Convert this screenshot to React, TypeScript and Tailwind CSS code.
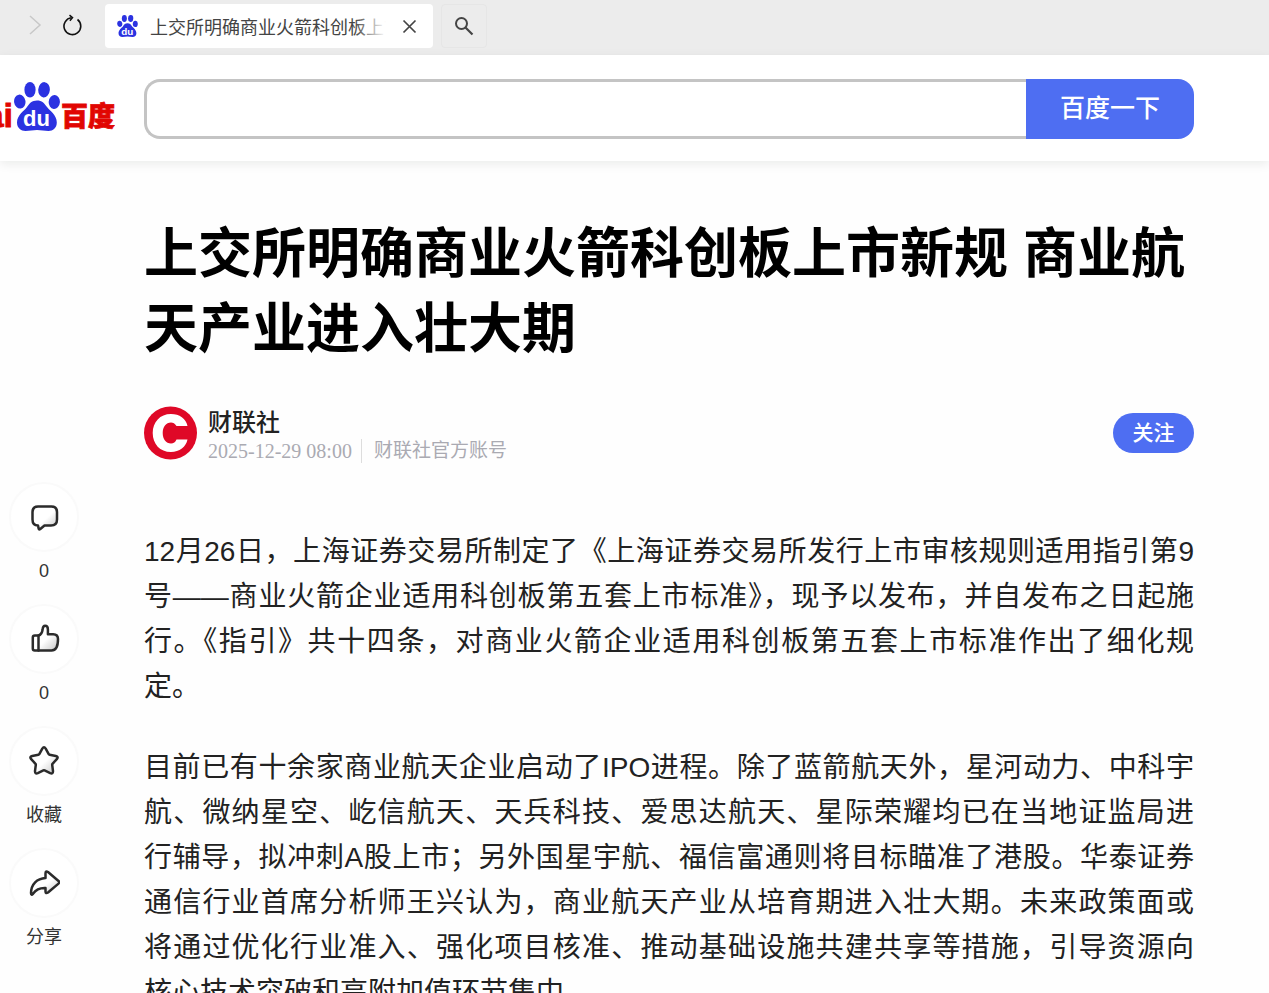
import type { ReactNode } from 'react';

const paragraphs = [
  [
    '12月26日，上海证券交易所制定了《上海证券交易所发行上市审核规则适用指引第9',
    '号——商业火箭企业适用科创板第五套上市标准》，现予以发布，并自发布之日起施',
    '行。《指引》共十四条，对商业火箭企业适用科创板第五套上市标准作出了细化规',
    '定。',
  ],
  [
    '目前已有十余家商业航天企业启动了IPO进程。除了蓝箭航天外，星河动力、中科宇',
    '航、微纳星空、屹信航天、天兵科技、爱思达航天、星际荣耀均已在当地证监局进',
    '行辅导，拟冲刺A股上市；另外国星宇航、福信富通则将目标瞄准了港股。华泰证券',
    '通信行业首席分析师王兴认为，商业航天产业从培育期进入壮大期。未来政策面或',
    '将通过优化行业准入、强化项目核准、推动基础设施共建共享等措施，引导资源向',
    '核心技术突破和高附加值环节集中。',
  ],
];

function Paw({ className }: { className: string }) {
  return (
    <svg viewBox="0 0 46 49" className={className} aria-hidden="true">
      <g fill="#2b32e1">
        <ellipse cx="5.8" cy="19.6" rx="5.7" ry="7" transform="rotate(-8 5.8 19.6)" />
        <ellipse cx="16" cy="7.800" rx="5.600" ry="7.700" />
        <ellipse cx="30" cy="7.800" rx="5.800" ry="7.700" transform="rotate(5 30 8.2)" />
        <ellipse cx="40.3" cy="20" rx="5.6" ry="7" transform="rotate(5 40.3 20)" />
        <path d="M23 18.500c-5 0-7.500 2.800-10 6.500-2.600 3.800-10 8-10 15.500 0 5.500 4 8.500 8.500 8.500 4 0 7.500-1 11.500-1s7.500 1 11.500 1c4.500 0 8.300-3 8.300-8.500 0-7.500-7-11.700-9.800-15.500-2.700-3.800-5-6.500-10-6.500z" />
      </g>
      <text x="22.500" y="43.500" textAnchor="middle" fontSize="22" fontWeight="700" fill="#fff" fontFamily="Liberation Sans, sans-serif">du</text>
    </svg>
  );
}

function Action({ label, children }: { label: string; children: ReactNode }) {
  return (
    <button type="button" className="flex h-[122px] flex-col items-center text-[18px] leading-6 text-[#333]">
      <span className="mb-[7px] flex size-[70px] items-center justify-center rounded-full border-2 border-[#fafafa] bg-white">
        <svg
          viewBox="0 0 32 32"
          className="size-8"
          fill="none"
          stroke="#2b2b2b"
          strokeWidth="2.5"
          strokeLinejoin="round"
          strokeLinecap="round"
          aria-hidden="true"
        >
          <defs>
            <linearGradient id="shade" x1="0.3" y1="0.3" x2="0.9" y2="0.9">
              <stop offset="0.4" stopColor="#fff" />
              <stop offset="1" stopColor="#d0d0d0" />
            </linearGradient>
          </defs>
          {children}
        </svg>
      </span>
      {label}
    </button>
  );
}

export default function App() {
  return (
    <div className="flex h-screen flex-col overflow-hidden bg-[#fefefe] font-['Liberation_Sans','Noto_Sans_CJK_SC',sans-serif] text-[#222]">
      <div className="flex h-[55px] shrink-0 items-start bg-[#ececec] pt-1 pl-6">
        <button type="button" aria-label="前进" className="mt-2 flex size-6 items-center justify-center">
          <svg viewBox="0 0 24 24" className="size-6" fill="none" stroke="#c8c8c8" strokeWidth="1.5" aria-hidden="true">
            <path d="M6 4l10 9-10 9" />
          </svg>
        </button>
        <button type="button" aria-label="刷新" className="mt-2 ml-3 flex size-6 items-center justify-center">
          <svg viewBox="0 0 24 24" className="size-6" fill="none" stroke="#111" strokeWidth="1.6" aria-hidden="true">
            <path d="M17.500 7.500A8.400 8.400 0 1 1 11.500 5.800" />
            <path d="M9.500 3.200l3 2.500-2.600 3" strokeWidth="1.5" />
          </svg>
        </button>
        <div className="ml-[21px] flex h-[44px] w-[328px] items-center rounded-sm bg-white pl-3">
          <Paw className="h-[22px] w-[21px] shrink-0" />
          <span className="relative mt-[3px] ml-3 h-6 w-[236px] overflow-hidden text-[18px] leading-6 whitespace-nowrap text-[#444]">
            上交所明确商业火箭科创板上市
            <span className="absolute inset-y-0 right-0 w-8 bg-linear-to-r from-transparent to-white" />
          </span>
          <button type="button" aria-label="关闭标签页" className="ml-3 flex size-6 items-center justify-center">
            <svg viewBox="0 0 24 24" className="size-6" fill="none" stroke="#444" strokeWidth="1.7" aria-hidden="true">
              <path d="M5.500 6.500l12 12M17.500 6.500l-12 12" />
            </svg>
          </button>
        </div>
        <button type="button" aria-label="搜索标签页" className="ml-2 flex h-[44px] w-[46px] items-center justify-center rounded-sm border border-[#e6e6e6]">
          <svg viewBox="0 0 24 24" className="size-6" fill="none" stroke="#444" strokeWidth="2" aria-hidden="true">
            <circle cx="9.500" cy="9.500" r="5.500" />
            <path d="M13.500 13.500l7 7" strokeWidth="2.2" />
          </svg>
        </button>
      </div>

      <header className="relative flex h-[106px] shrink-0 items-start bg-white pt-6 pr-[75px] shadow-[0_3px_10px_rgba(0,25,15,0.08)]">
        <a href="#" aria-label="百度首页" className="flex h-[60px] w-[115px] shrink-0 items-center justify-end overflow-hidden font-bold text-[#e10602]">
          <span className="mt-3 mr-px text-[34px] leading-9 [-webkit-text-stroke:0.8px_#e10602]">Bai</span>
          <Paw className="mr-px mb-[6px] h-[49px] w-[46px] shrink-0" />
          <span className="mt-4 shrink-0 text-[27px] leading-9 font-black [-webkit-text-stroke:0.8px_#e10602]">百度</span>
        </a>
        <form className="ml-[29px] flex h-[60px] min-w-0 flex-1" onSubmit={(e) => e.preventDefault()}>
          <input
            type="text"
            aria-label="搜索"
            className="min-w-0 flex-1 rounded-l-2xl border-3 border-r-0 border-[#c4c4c4] bg-white px-5 text-[26px] outline-none"
          />
          <button type="submit" className="w-[168px] rounded-r-2xl bg-[#4e6ef2] text-[25px] font-medium text-white">
            百度一下
          </button>
        </form>
      </header>

      <div className="flex min-h-0 flex-1 items-start pr-[75px]">
        <aside className="flex w-[88px] shrink-0 flex-col items-center pt-[321px]">
          <Action label="0">
            <path fill="url(#shade)" d="M10 5.500h13.500q5.500 0 5.500 5.500v7.500q0 6-6 6h-6.500l-4.500 3.800q-1 .6-1.300-.6l-.7-3.200q-5.500 0-5.500-6V11q0-5.500 5.500-5.500z" />
          </Action>
          <Action label="0">
            <path fill="url(#shade)" d="M10.500 12.500c3-.8 3.800-3.500 4.100-6 .2-2.300.8-3.700 2.500-3.700s2.800 1.500 2.800 3.700v4.700h5.300q4.800 0 4.800 4.800c0 7-1.500 11.500-6.500 11.500H6.800q-2 0-2-2v-11q0-2 2-2z" />
            <path d="M10.500 12.500v15" />
          </Action>
          <Action label="收藏">
            <path fill="url(#shade)" d="M14.300 3.600q1.700-2.600 3.400 0l3 5.600q.3.500.9.600l6.200 1.200q3 .8 1 3.200l-4.300 4.600q-.4.500-.3 1.100l.8 6.300q0 3-2.800 1.900l-5.600-2.700q-.6-.3-1.200 0l-5.600 2.700q-2.800 1.100-2.800-1.900l.8-6.300q.1-.6-.3-1.100l-4.300-4.600q-2-2.400 1-3.200l6.200-1.200q.6-.1.900-.6z" />
          </Action>
          <Action label="分享">
            <path fill="url(#shade)" d="M17.500 6.500q0-3 2.500-1.500L30.500 14q1.500 1.300 0 2.600L20 25.500q-2.500 1.500-2.500-1v-3.500c-6-.3-9.500 1.500-12.500 5.800q-2 2-2-.8C3.200 17 9 11.500 17.500 11z" />
          </Action>
        </aside>

        <main className="ml-14 min-w-0 flex-1 pt-14">
          <h1 className="text-[54px] leading-[75px] font-bold text-black">上交所明确商业火箭科创板上市新规 商业航天产业进入壮大期</h1>

          <div className="mt-9 flex h-[60px] items-center">
            <svg viewBox="0 0 54 54" className="size-[54px] shrink-0" role="img" aria-label="财联社">
              <circle cx="26.500" cy="27" r="26.500" fill="#df0827" />
              <path fill="#fff" d="M43.500 20H32.500C31 17.500 29 16.500 27 16.500c-5 0-8.300 4.500-8.300 10.500s3.300 10.500 8.300 10.500c2.500 0 4.500-1.500 5.500-4h11C42 41 35.500 46 27 46 16 46 8.700 38 8.700 27S16 8 27 8C35.500 8 42 12.500 43.500 20z" />
            </svg>
            <div className="mt-1 ml-[10px] flex-1">
              <div className="text-[24px] leading-8 font-medium">财联社</div>
              <div className="flex items-center text-[#aaaab2]">
                <time className="font-['Liberation_Serif',serif] text-[20px] leading-6">2025-12-29 08:00</time>
                <span className="ml-[9px] border-l border-[#ddd] pl-3 text-[19px] leading-6">财联社官方账号</span>
              </div>
            </div>
            <button type="button" className="h-10 w-[81px] rounded-full bg-[#4e6ef2] text-[21px] leading-6 font-medium text-white">
              关注
            </button>
          </div>

          <article className="mt-[66px] space-y-9 text-[28px] leading-[45px]">
            {paragraphs.map((lines) => (
              <p key={lines[0]}>
                {lines.map((line, i) => (
                  <span
                    key={line}
                    className={i < lines.length - 1 ? 'block text-justify [text-align-last:justify]' : 'block'}
                  >
                    {line}
                  </span>
                ))}
              </p>
            ))}
          </article>
        </main>
      </div>
    </div>
  );
}
